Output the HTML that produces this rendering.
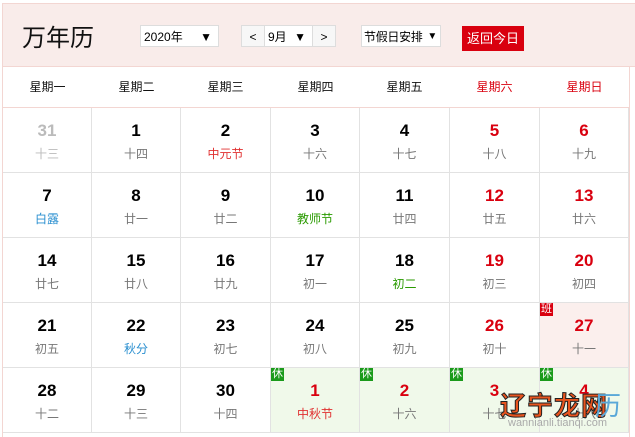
<html><head><style>
body{margin:0;width:635px;height:437px;overflow:hidden;background:#fff;font-family:"Liberation Sans","Noto Sans CJK SC",sans-serif;position:relative}
.hd{position:absolute;left:2px;top:3px;width:640px;height:62px;background:#f9ecea;border:1px solid #f3d6d2}
.t{position:absolute;left:22px;top:18px;font-size:24px;color:#111}
.sel{position:absolute;height:22px;top:25px;background:#fff;border:1px solid #ddd;font-size:12px;line-height:22px;box-sizing:border-box;padding-left:3px;color:#000;white-space:nowrap}
.btn{position:absolute;left:462px;top:26px;width:62px;height:25px;background:#d9000f;color:#fff;font-size:13px;line-height:25px;text-align:center}
.wk{position:absolute;top:66px;height:42px;line-height:42px;font-size:12px;text-align:center;width:89px}
.c{position:absolute;width:89px;height:64px;border-right:1px solid #e2e2e2;border-bottom:1px solid #e2e2e2;text-align:center;box-sizing:border-box}
.n{position:absolute;top:13px;width:100%;font-size:17px;font-weight:bold;color:#000}
.l{position:absolute;top:37px;width:100%;font-size:12px;color:#777}
.r .n{color:#d9000f}
.g .n{color:#bbb}.g .l{color:#bbb}
.tag{position:absolute;left:0;top:0;width:13px;height:13px;font-size:11px;line-height:13px;color:#fff;text-align:center}
</style></head><body>
<div class="hd"></div>
<div class="t">万年历</div>
<div class="sel" style="left:140px;width:79px">2020年<span style="position:absolute;right:6px">▼</span></div>
<div class="sel" style="left:241px;width:24px;background:#f7f7f7;text-align:center;padding:0">&lt;</div>
<div class="sel" style="left:264px;width:49px">9月<span style="position:absolute;right:6px">▼</span></div>
<div class="sel" style="left:312px;width:24px;background:#f7f7f7;text-align:center;padding:0">&gt;</div>
<div class="sel" style="left:361px;width:80px;padding-left:2px;letter-spacing:-0.3px">节假日安排<span style="position:absolute;right:3px;font-size:10px">▼</span></div>
<div class="btn">返回今日</div>
<div style="position:absolute;left:2px;top:66px;width:1px;height:371px;background:#f3d6d2"></div>
<div style="position:absolute;left:629px;top:66px;width:1px;height:371px;background:#f3d6d2"></div>
<div style="position:absolute;left:2px;top:107px;width:628px;height:1px;background:#f3d6d2"></div>
<div id="g"></div>
<div style="position:absolute;left:500px;top:386px;font-size:26px;font-weight:bold;color:#e8541e;-webkit-text-stroke:1px #222;letter-spacing:1px">辽宁龙网</div>
<div style="position:absolute;left:595px;top:386px;font-size:26px;color:#5aa8d8">历</div>
<div style="position:absolute;left:508px;top:417px;font-size:11px;color:#aaa">wannianli.tianqi.com</div>
<script>
var W=["星期一","星期二","星期三","星期四","星期五","星期六","星期日"];
var xs=[3,92,181,271,360,450,540];
var h="";
W.forEach(function(w,i){h+='<div class="wk" style="left:'+xs[i]+'px;color:'+(i>4?'#d9000f':'#111')+'">'+w+'</div>'});
var D=[["31","十三","g"],["1","十四"],["2","中元节","","#e03030"],["3","十六"],["4","十七"],["5","十八","r"],["6","十九","r"],
["7","白露","","#2a8fd0"],["8","廿一"],["9","廿二"],["10","教师节","","#2a9a00"],["11","廿四"],["12","廿五","r"],["13","廿六","r"],
["14","廿七"],["15","廿八"],["16","廿九"],["17","初一"],["18","初二","","#2a9a00"],["19","初三","r"],["20","初四","r"],
["21","初五"],["22","秋分","","#2a8fd0"],["23","初七"],["24","初八"],["25","初九"],["26","初十","r"],["27","十一","r","","#fbefed","班"],
["28","十二"],["29","十三"],["30","十四"],["1","中秋节","r","#e03030","#f0f9ea","休"],["2","十六","r","","#f0f9ea","休"],["3","十七","r","","#f0f9ea","休"],["4","十八","r","","#f0f9ea","休"]];
var ys=[108,173,238,303,368];
D.forEach(function(d,k){var r=Math.floor(k/7),c=k%7;
h+='<div class="c '+(d[2]||'')+'" style="left:'+xs[c]+'px;top:'+ys[r]+'px;width:'+(c==6?89:(xs[c+1]-xs[c]))+'px;height:65px;'+(d[4]?'background:'+d[4]:'')+'">';
if(d[5])h+='<div class="tag" style="background:'+(d[5]=="班"?'#d9000f':'#1a9a1a')+'">'+d[5]+'</div>';
h+='<div class="n">'+d[0]+'</div><div class="l" style="'+(d[3]?'color:'+d[3]:'')+'">'+d[1]+'</div></div>'});
document.getElementById("g").innerHTML=h;
</script>
</body></html>
